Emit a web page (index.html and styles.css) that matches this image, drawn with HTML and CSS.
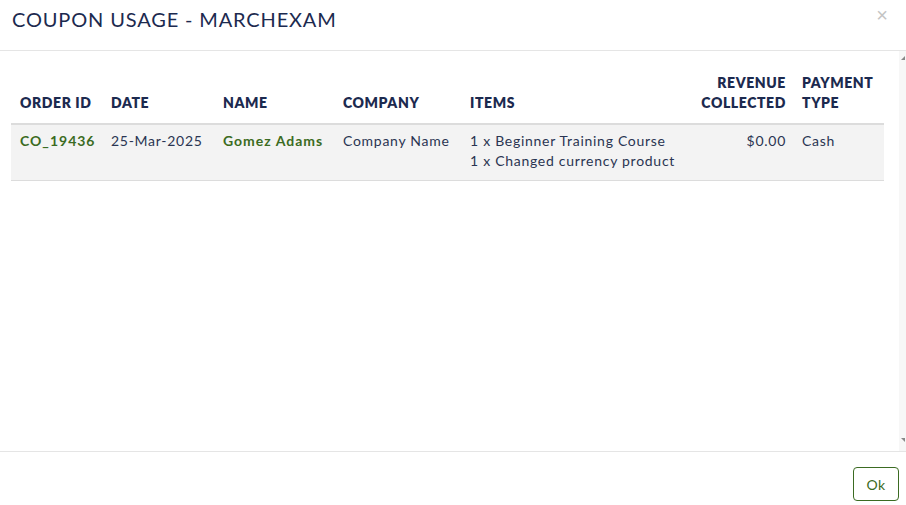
FILE: index.html
```html
<!DOCTYPE html>
<html>
<head>
<meta charset="utf-8">
<link rel="stylesheet" href="styles.css">
</head>
<body>
<div class="modal">
  <div class="modal-header">
    <h4 class="modal-title">COUPON USAGE - MARCHEXAM</h4>
    <button class="close" type="button">&times;</button>
  </div>
  <div class="modal-body">
    <table class="usage">
      <colgroup>
        <col class="c1"><col class="c2"><col class="c3"><col class="c4"><col class="c5"><col class="c6"><col class="c7">
      </colgroup>
      <thead>
        <tr>
          <th>ORDER ID</th>
          <th>DATE</th>
          <th>NAME</th>
          <th>COMPANY</th>
          <th>ITEMS</th>
          <th class="right">REVENUE<br>COLLECTED</th>
          <th>PAYMENT<br>TYPE</th>
        </tr>
      </thead>
      <tbody>
        <tr>
          <td class="link">CO_19436</td>
          <td>25-Mar-2025</td>
          <td class="link">Gomez Adams</td>
          <td>Company Name</td>
          <td>1 x Beginner Training Course<br>1 x Changed currency product</td>
          <td class="right">$0.00</td>
          <td>Cash</td>
        </tr>
      </tbody>
    </table>
  </div>
  <div class="modal-footer">
    <button class="btn-ok" type="button">Ok</button>
  </div>
</div>
</body>
</html>
```

FILE: styles.css
```css
html, body {
  margin: 0;
  padding: 0;
  background: #ffffff;
  font-family: "Lato", "Open Sans", sans-serif;
  color: #1c2a4f;
}

.modal {
  width: 906px;
  height: 505px;
  display: flex;
  flex-direction: column;
}

.modal-header {
  height: 50px;
  border-bottom: 1px solid #e5e5e5;
  display: flex;
  align-items: flex-start;
  justify-content: space-between;
  padding: 0 18px 0 12px;
  box-sizing: content-box;
}

.modal-title {
  margin: 0;
  padding-top: 7px;
  font-size: 20px;
  font-weight: 400;
  line-height: 24px;
  letter-spacing: 0.85px;
  color: #1c2a4f;
}

.close {
  border: 0;
  background: none;
  padding: 0;
  margin-top: 5px;
  font-family: "Liberation Sans", sans-serif;
  font-size: 20px;
  line-height: 20px;
  color: #c4c4c4;
  cursor: pointer;
}

.modal-body {
  height: 400px;
  display: flex;
  padding: 14px 0 0 11px;
  box-sizing: border-box;
}

.table-area {
  flex: 1;
}

.usage {
  width: 873px;
  height: max-content;
  border-collapse: collapse;
  table-layout: fixed;
  font-size: 14px;
}

.modal-body::after {
  content: "";
  margin-left: auto;
  margin-top: -14px;
  width: 7px;
  height: 400px;
  background-color: #f7f7f7;
  background-image:
    url("data:image/svg+xml;utf8,<svg xmlns='http://www.w3.org/2000/svg' width='7' height='400'><polygon points='6,5 6,9 2,9' fill='%23888'/><polygon points='2,387 6,387 6,391' fill='%23888'/></svg>");
  background-repeat: no-repeat;
}

.c1 { width: 92px; }
.c2 { width: 112px; }
.c3 { width: 120px; }
.c4 { width: 127px; }
.c5 { width: 230px; }
.c6 { width: 102px; }
.c7 { width: 90px; }

.usage th {
  text-align: left;
  vertical-align: bottom;
  font-weight: 800;
  letter-spacing: 0.6px;
  line-height: 20px;
  padding: 8px 8px 10px 8px;
  border-bottom: 2px solid #dcdcdc;
  color: #1c2a4f;
  white-space: nowrap;
}

.usage td {
  vertical-align: top;
  line-height: 20px;
  padding: 6px 8px 9px 8px;
  background: #f3f3f3;
  border-bottom: 1px solid #dcdcdc;
  color: #2a3552;
  letter-spacing: 0.72px;
  white-space: nowrap;
}

.usage th:first-child,
.usage td:first-child {
  padding-left: 9px;
}

.usage .right {
  text-align: right;
}

.usage td.link {
  color: #3b6b22;
  font-weight: 700;
  letter-spacing: 1px;
}

.modal-footer {
  flex: 1;
  border-top: 1px solid #e5e5e5;
  display: flex;
  justify-content: flex-end;
  align-items: flex-start;
  padding: 15px 7px 0 0;
}

.btn-ok {
  width: 46px;
  height: 34px;
  border: 1px solid #3b6b22;
  border-radius: 4px;
  background: #ffffff;
  color: #3b6b22;
  font-family: "Lato", "Open Sans", sans-serif;
  font-size: 14px;
  letter-spacing: 0.4px;
  cursor: pointer;
}
```
